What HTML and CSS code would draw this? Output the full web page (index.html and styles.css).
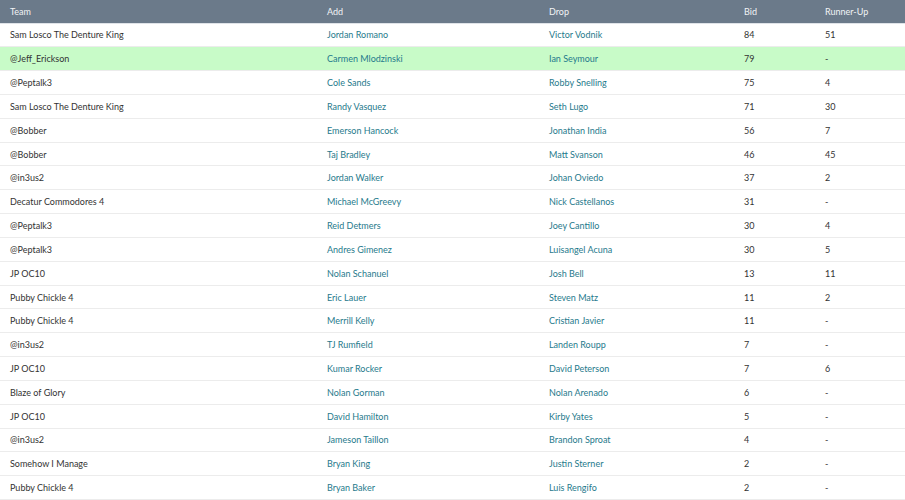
FILE: index.html
```html
<!DOCTYPE html>
<html>
<head>
<meta charset="utf-8">
<link rel="stylesheet" href="styles.css">
</head>
<body>
<table class="bids">
  <colgroup>
    <col class="c-team"><col class="c-add"><col class="c-drop"><col class="c-bid"><col class="c-ru">
  </colgroup>
  <thead>
    <tr><th>Team</th><th>Add</th><th>Drop</th><th>Bid</th><th>Runner-Up</th></tr>
  </thead>
  <tbody>
    <tr><td>Sam Losco The Denture King</td><td class="link">Jordan Romano</td><td class="link">Victor Vodnik</td><td>84</td><td>51</td></tr>
    <tr class="win"><td>@Jeff_Erickson</td><td class="link">Carmen Mlodzinski</td><td class="link">Ian Seymour</td><td>79</td><td>-</td></tr>
    <tr><td>@Peptalk3</td><td class="link">Cole Sands</td><td class="link">Robby Snelling</td><td>75</td><td>4</td></tr>
    <tr><td>Sam Losco The Denture King</td><td class="link">Randy Vasquez</td><td class="link">Seth Lugo</td><td>71</td><td>30</td></tr>
    <tr><td>@Bobber</td><td class="link">Emerson Hancock</td><td class="link">Jonathan India</td><td>56</td><td>7</td></tr>
    <tr><td>@Bobber</td><td class="link">Taj Bradley</td><td class="link">Matt Svanson</td><td>46</td><td>45</td></tr>
    <tr><td>@in3us2</td><td class="link">Jordan Walker</td><td class="link">Johan Oviedo</td><td>37</td><td>2</td></tr>
    <tr><td>Decatur Commodores 4</td><td class="link">Michael McGreevy</td><td class="link">Nick Castellanos</td><td>31</td><td>-</td></tr>
    <tr><td>@Peptalk3</td><td class="link">Reid Detmers</td><td class="link">Joey Cantillo</td><td>30</td><td>4</td></tr>
    <tr><td>@Peptalk3</td><td class="link">Andres Gimenez</td><td class="link">Luisangel Acuna</td><td>30</td><td>5</td></tr>
    <tr><td>JP OC10</td><td class="link">Nolan Schanuel</td><td class="link">Josh Bell</td><td>13</td><td>11</td></tr>
    <tr><td>Pubby Chickle 4</td><td class="link">Eric Lauer</td><td class="link">Steven Matz</td><td>11</td><td>2</td></tr>
    <tr><td>Pubby Chickle 4</td><td class="link">Merrill Kelly</td><td class="link">Cristian Javier</td><td>11</td><td>-</td></tr>
    <tr><td>@in3us2</td><td class="link">TJ Rumfield</td><td class="link">Landen Roupp</td><td>7</td><td>-</td></tr>
    <tr><td>JP OC10</td><td class="link">Kumar Rocker</td><td class="link">David Peterson</td><td>7</td><td>6</td></tr>
    <tr><td>Blaze of Glory</td><td class="link">Nolan Gorman</td><td class="link">Nolan Arenado</td><td>6</td><td>-</td></tr>
    <tr><td>JP OC10</td><td class="link">David Hamilton</td><td class="link">Kirby Yates</td><td>5</td><td>-</td></tr>
    <tr><td>@in3us2</td><td class="link">Jameson Taillon</td><td class="link">Brandon Sproat</td><td>4</td><td>-</td></tr>
    <tr><td>Somehow I Manage</td><td class="link">Bryan King</td><td class="link">Justin Sterner</td><td>2</td><td>-</td></tr>
    <tr><td>Pubby Chickle 4</td><td class="link">Bryan Baker</td><td class="link">Luis Rengifo</td><td>2</td><td>-</td></tr>
  </tbody>
</table>
</body>
</html>
```
FILE: styles.css
```css
html, body {
  margin: 0;
  padding: 0;
  background: #fff;
}
body {
  font-family: Lato, "Open Sans", sans-serif;
  font-size: 9px;
  color: #333;
}
.bids {
  width: 905px;
  border-collapse: collapse;
  table-layout: fixed;
}
.c-team { width: 317px; }
.c-add { width: 222px; }
.c-drop { width: 195px; }
.c-bid { width: 81px; }
.c-ru { width: 90px; }
.bids th {
  background: #6b7a8a;
  color: #f2f4f6;
  font-weight: normal;
  text-align: left;
  height: 23px;
  padding: 0 10px;
  box-sizing: border-box;
  border-bottom: 1px solid #dfe3e8;
}
.bids td {
  height: 23.84px;
  padding: 0 10px;
  box-sizing: border-box;
  border-bottom: 1px solid #ececec;
  white-space: nowrap;
}
.bids tr.win td {
  background: #c8fbc8;
}
.bids td.link {
  color: #1f7a8c;
}
```
